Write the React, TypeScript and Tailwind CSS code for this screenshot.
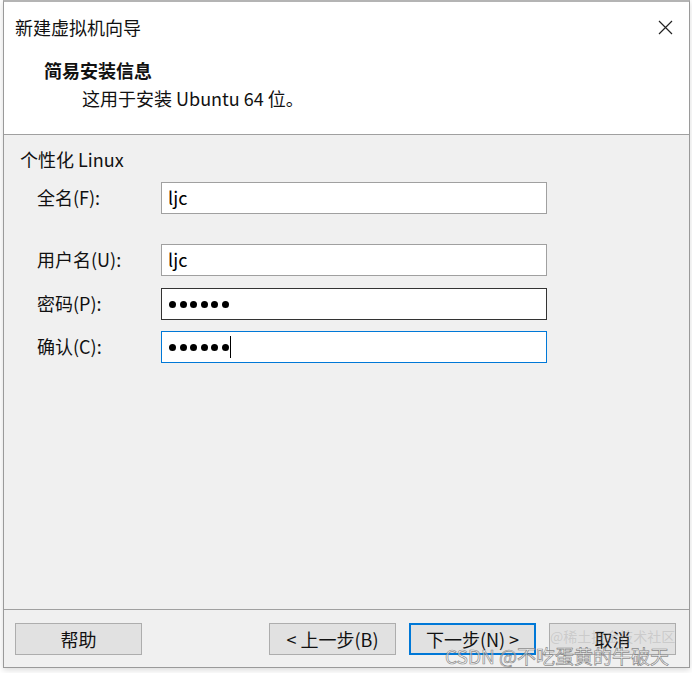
import React from 'react'

const font = "font-['Noto_Sans_CJK_SC','Noto_Sans',sans-serif]"

function Field({
  label,
  value,
  password,
  variant = 'normal',
  caret,
  className = '',
}: {
  label: string
  value?: string
  password?: number
  variant?: 'normal' | 'hover' | 'focus'
  caret?: boolean
  className?: string
}) {
  const border =
    variant === 'focus'
      ? 'border-[#0078d7]'
      : variant === 'hover'
        ? 'border-[#333333]'
        : 'border-[#a0a0a0]'

  return (
    <div className={`flex h-[32px] items-center ${className}`}>
      <div className="w-[157px] pl-[33px] pb-[2px] text-[18px] leading-none text-[#111]">{label}</div>
      <div className={`flex h-[32px] w-[386px] items-center border bg-white pl-[6px] ${border}`}>
        {value && <span className="pb-[2px] text-[18px] leading-none text-black">{value}</span>}
        {password && (
          <div className="flex items-center gap-[3.5px] pl-[1px]">
            {Array.from({ length: password }).map((_, i) => (
              <span key={i} className="inline-block h-[7px] w-[7px] rounded-full bg-black" />
            ))}
          </div>
        )}
        {caret && <span className="ml-[1px] inline-block h-[22px] w-[1px] bg-black" />}
      </div>
    </div>
  )
}

function Btn({ children, primary }: { children: React.ReactNode; primary?: boolean }) {
  return (
    <button
      className={`flex h-[32px] w-[127px] items-center justify-center bg-[#e1e1e1] text-[18px] leading-none text-[#111] ${
        primary ? 'border-2 border-[#0078d7]' : 'border border-[#adadad]'
      }`}
    >
      {children}
    </button>
  )
}

export default function App() {
  return (
    <div className={`relative h-[673px] w-[692px] overflow-hidden bg-white pl-[3px] ${font}`}>
      <div className="flex w-[687px] flex-col border-x border-b border-t-2 border-x-[#9a9a9a] border-b-[#9a9a9a] border-t-[#b4b4b4] shadow-[0_2px_6px_rgba(0,0,0,0.15)]">
        {/* title bar + header */}
        <div className="h-[133px] border-b border-[#a0a0a0] bg-white">
          <div className="flex h-[50px] items-center justify-between pl-[11px] pr-[16px]">
            <span className="text-[18px] leading-none text-[#111]">新建虚拟机向导</span>
            <svg width="15" height="15" viewBox="0 0 15 15">
              <path d="M1 1 L14 14 M14 1 L1 14" stroke="#222" strokeWidth="1.2" fill="none" />
            </svg>
          </div>
          <div className="pl-[40px] pt-[6px]">
            <div className="text-[18px] font-bold leading-[24px] text-[#111]">简易安装信息</div>
            <div className="mt-[4px] pl-[38px] text-[18px] leading-[24px] text-[#111]">
              这用于安装 Ubuntu 64 位。
            </div>
          </div>
        </div>

        {/* body */}
        <div className="h-[475px] border-b border-[#a0a0a0] bg-[#f0f0f0]">
          <div className="pl-[16px] pt-[12px] text-[18px] leading-[24px] text-[#111]">个性化 Linux</div>
          <Field label="全名(F):" value="ljc" className="mt-[11px]" />
          <Field label="用户名(U):" value="ljc" className="mt-[30px]" />
          <Field label="密码(P):" password={6} variant="hover" className="mt-[12px]" />
          <Field label="确认(C):" password={6} variant="focus" caret className="mt-[11px]" />
        </div>

        {/* footer */}
        <div className="flex h-[57px] items-start bg-[#f0f0f0] pl-[11px] pr-[13px] pt-[13px]">
          <Btn>帮助</Btn>
          <div className="ml-auto flex gap-[13px]">
            <Btn>&lt; 上一步(B)</Btn>
            <Btn primary>下一步(N) &gt;</Btn>
            <Btn>取消</Btn>
          </div>
        </div>
      </div>

      {/* watermark */}
      <div className="pointer-events-none absolute left-[550px] top-[629px] text-[14px] leading-none text-[rgba(150,150,150,0.3)]">
        @稀土掘金技术社区
      </div>
      <div className="pointer-events-none absolute left-[445px] top-[646px] text-[19px] leading-none text-[rgba(255,255,255,0.55)] [-webkit-text-stroke:0.7px_rgba(110,110,110,0.8)]">
        CSDN @不吃蛋黄的牛破天
      </div>
    </div>
  )
}
